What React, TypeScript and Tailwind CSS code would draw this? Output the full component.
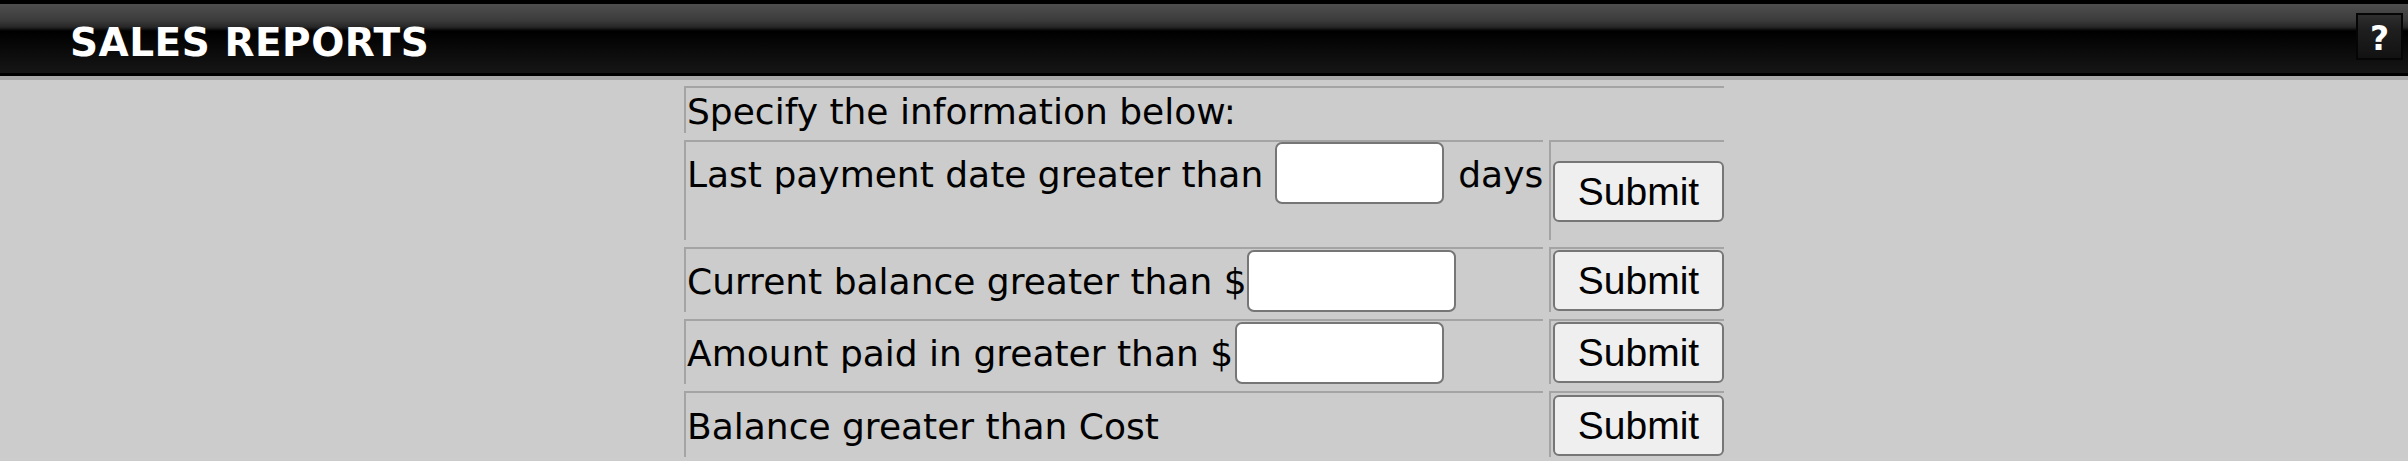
import React from 'react';

const cellBorder = 'border-t-2 border-l-2 border-[#a4a4a4]';

function SubmitButton() {
  return (
    <button
      type="button"
      className="h-[61px] w-[171px] rounded-[6px] border-2 border-[#767676] bg-[#efefef] font-['Liberation_Sans',Arial,sans-serif] text-[39px] leading-none text-black"
    >
      Submit
    </button>
  );
}

function Header() {
  return (
    <div className="border-b-4 border-[#aaaaaa]">
      <div className="flex h-[76px] items-center justify-between border-t-4 border-b-[3px] border-black bg-[linear-gradient(to_bottom,#4e4e4e_0px,#3c3c3c_16px,#272727_23px,#000_27px,#161616_69px)] pt-[7px] pr-[5px] pl-[70px]">
        <h1 className="font-['DejaVu_Sans',sans-serif] text-[39px] font-bold leading-none tracking-[0.5px] text-white">
          SALES REPORTS
        </h1>
        <button
          type="button"
          className="mb-[12px] flex h-[47px] w-[47px] items-center justify-center border-2 border-[#050505] bg-[linear-gradient(to_bottom,#2e2e2e,#1e1e1e_35%,#121212)] pt-[4px] font-['DejaVu_Sans',sans-serif] text-[33px] font-bold leading-none text-white"
        >
          ?
        </button>
      </div>
    </div>
  );
}

export default function App() {
  return (
    <div className="min-h-[461px] bg-[#cbcccb] font-['DejaVu_Sans',sans-serif] text-[36px] text-black">
      <Header />

      <div className="flex justify-center pt-[6px]">
        <div className="grid grid-cols-[859px_175px] gap-x-[6px] gap-y-[7px]">
          <div className={`col-span-2 h-[47px] pt-[3px] pl-[1px] leading-[42px] ${cellBorder}`}>
            Specify the information below:
          </div>

          <div className={`h-[100px] pl-[1px] ${cellBorder}`}>
            <div className="flex h-[62px] items-center whitespace-nowrap">
              <span className="pt-[3px]">Last payment date greater than</span>
              <input
                type="text"
                className="ml-[12px] h-[62px] w-[169px] rounded-[7px] border-2 border-[#767676] bg-white"
              />
              <span className="ml-[14px] pt-[3px]">days</span>
            </div>
          </div>
          <div className={`flex h-[100px] items-center pl-[2px] ${cellBorder}`}>
            <SubmitButton />
          </div>

          <div className={`flex h-[65px] items-center whitespace-nowrap pl-[1px] ${cellBorder}`}>
            <span className="pt-[3px]">Current balance greater than $</span>
            <input
              type="text"
              className="h-[62px] w-[209px] rounded-[7px] border-2 border-[#767676] bg-white"
            />
          </div>
          <div className={`flex h-[65px] items-center pl-[2px] ${cellBorder}`}>
            <SubmitButton />
          </div>

          <div className={`flex h-[65px] items-center whitespace-nowrap pl-[1px] ${cellBorder}`}>
            <span className="pt-[3px]">Amount paid in greater than $</span>
            <input
              type="text"
              className="ml-[2px] h-[62px] w-[209px] rounded-[7px] border-2 border-[#767676] bg-white"
            />
          </div>
          <div className={`flex h-[65px] items-center pl-[2px] ${cellBorder}`}>
            <SubmitButton />
          </div>

          <div className={`flex h-[66px] items-center whitespace-nowrap pl-[1px] ${cellBorder}`}>
            <span className="pt-[3px]">Balance greater than Cost</span>
          </div>
          <div className={`flex h-[66px] items-center pl-[2px] ${cellBorder}`}>
            <SubmitButton />
          </div>
        </div>
      </div>
    </div>
  );
}
